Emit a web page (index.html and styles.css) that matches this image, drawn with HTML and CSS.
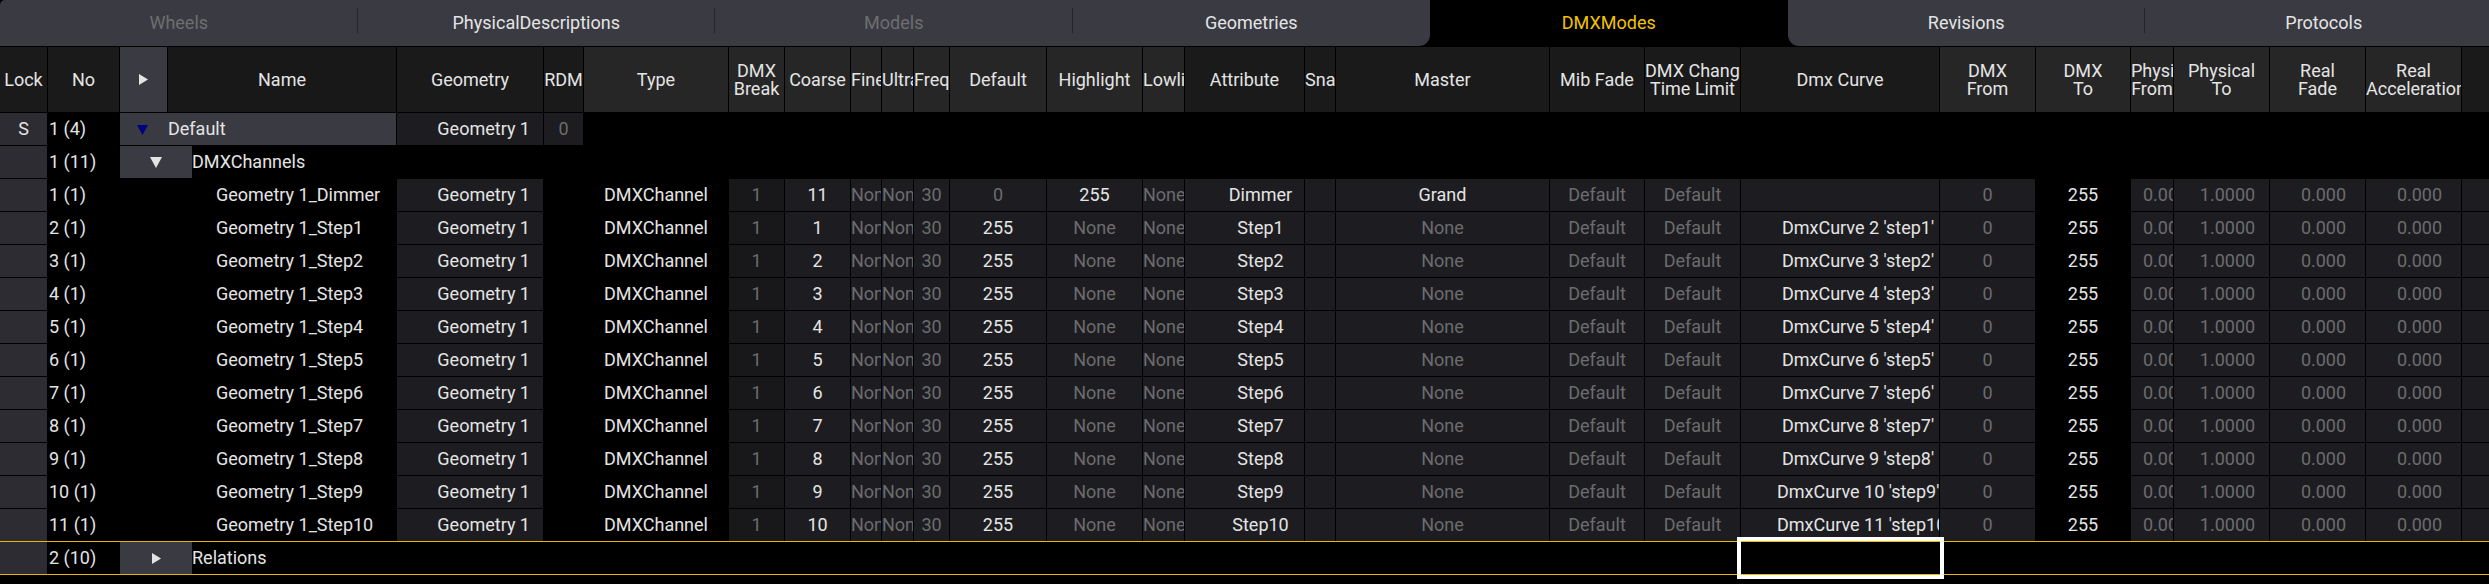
FILE: index.html
```html
<!DOCTYPE html>
<html>
<head>
<meta charset="utf-8">
<link rel="stylesheet" href="styles.css">
</head>
<body>
<div class="tabs">
  <div class="tab off sep first">Wheels</div>
  <div class="tab sep">PhysicalDescriptions</div>
  <div class="tab off sep">Models</div>
  <div class="tab before">Geometries</div>
  <div class="tab active">DMXModes</div>
  <div class="tab after sep">Revisions</div>
  <div class="tab">Protocols</div>
</div>

<div class="row head">
  <div class="h hd">Lock</div>
  <div class="h hd">No</div>
  <div class="h ha"><svg class="tri" width="11" height="11" viewBox="0 0 11 11"><polygon points="1,0 10,5.5 1,11" fill="#e4e4e4"/></svg></div>
  <div class="h hn">Name</div>
  <div class="h hd">Geometry</div>
  <div class="h hd">RDM</div>
  <div class="h hl">Type</div>
  <div class="h hl"><div>DMX<br>Break</div></div>
  <div class="h hl">Coarse</div>
  <div class="h hl">Fine</div>
  <div class="h hl">Ultra</div>
  <div class="h hl">Freq</div>
  <div class="h hl">Default</div>
  <div class="h hl">Highlight</div>
  <div class="h hl">Lowlight</div>
  <div class="h hd">Attribute</div>
  <div class="h hd">Snap</div>
  <div class="h hd">Master</div>
  <div class="h hd">Mib Fade</div>
  <div class="h hd"><div>DMX Change<br>Time Limit</div></div>
  <div class="h hd">Dmx Curve</div>
  <div class="h hl"><div>DMX<br>From</div></div>
  <div class="h hl"><div>DMX<br>To</div></div>
  <div class="h hl"><div>Physical<br>From</div></div>
  <div class="h hl"><div>Physical<br>To</div></div>
  <div class="h hl"><div>Real<br>Fade</div></div>
  <div class="h hl"><div>Real<br>Acceleration</div></div>
  <div class="h hd"></div>
</div>

<div class="row">
  <div class="c lk">S</div>
  <div class="c k l">1 (4)</div>
  <div class="c blk span2"><span class="ibox"><svg width="11" height="11" viewBox="0 0 11 11"><polygon points="0,1 11,1 5.5,11" fill="#000080"/></svg></span>Default</div>
  <div class="c g r">Geometry 1</div>
  <div class="c g dim">0</div>
  <div class="c k rest"></div>
</div>

<div class="row">
  <div class="c lk"></div>
  <div class="c k l">1 (11)</div>
  <div class="c k l tree"><span class="tbox"><svg width="12" height="11" viewBox="0 0 12 11"><polygon points="0,0 12,0 6,11" fill="#e4e4e4"/></svg></span>DMXChannels</div>
</div>

<div class="row">
  <div class="c lk"></div><div class="c k l">1 (1)</div><div class="c k"></div><div class="c k l nm">Geometry 1_Dimmer</div><div class="c g r">Geometry 1</div><div class="c k"></div><div class="c k">DMXChannel</div><div class="c g2 dim">1</div><div class="c g">11</div><div class="c g dim">None</div><div class="c g dim">None</div><div class="c g dim">30</div><div class="c g dim">0</div><div class="c g">255</div><div class="c g dim">None</div><div class="c g at">Dimmer</div><div class="c g"></div><div class="c g">Grand</div><div class="c g dim">Default</div><div class="c g dim">Default</div><div class="c g cv"></div><div class="c g dim">0</div><div class="c k">255</div><div class="c g dim p12">0.0000</div><div class="c g dim p12">1.0000</div><div class="c g dim p12">0.000</div><div class="c g dim p12">0.000</div><div class="c g"></div>
</div>

<div class="row">
  <div class="c lk"></div><div class="c k l">2 (1)</div><div class="c k"></div><div class="c k l nm">Geometry 1_Step1</div><div class="c g r">Geometry 1</div><div class="c k"></div><div class="c k">DMXChannel</div><div class="c g2 dim">1</div><div class="c g">1</div><div class="c g dim">None</div><div class="c g dim">None</div><div class="c g dim">30</div><div class="c g">255</div><div class="c g dim">None</div><div class="c g dim">None</div><div class="c g at">Step1</div><div class="c g"></div><div class="c g dim">None</div><div class="c g dim">Default</div><div class="c g dim">Default</div><div class="c g cv">DmxCurve 2 'step1'</div><div class="c g dim">0</div><div class="c k">255</div><div class="c g dim p12">0.0000</div><div class="c g dim p12">1.0000</div><div class="c g dim p12">0.000</div><div class="c g dim p12">0.000</div><div class="c g"></div>
</div>

<div class="row">
  <div class="c lk"></div><div class="c k l">3 (1)</div><div class="c k"></div><div class="c k l nm">Geometry 1_Step2</div><div class="c g r">Geometry 1</div><div class="c k"></div><div class="c k">DMXChannel</div><div class="c g2 dim">1</div><div class="c g">2</div><div class="c g dim">None</div><div class="c g dim">None</div><div class="c g dim">30</div><div class="c g">255</div><div class="c g dim">None</div><div class="c g dim">None</div><div class="c g at">Step2</div><div class="c g"></div><div class="c g dim">None</div><div class="c g dim">Default</div><div class="c g dim">Default</div><div class="c g cv">DmxCurve 3 'step2'</div><div class="c g dim">0</div><div class="c k">255</div><div class="c g dim p12">0.0000</div><div class="c g dim p12">1.0000</div><div class="c g dim p12">0.000</div><div class="c g dim p12">0.000</div><div class="c g"></div>
</div>

<div class="row">
  <div class="c lk"></div><div class="c k l">4 (1)</div><div class="c k"></div><div class="c k l nm">Geometry 1_Step3</div><div class="c g r">Geometry 1</div><div class="c k"></div><div class="c k">DMXChannel</div><div class="c g2 dim">1</div><div class="c g">3</div><div class="c g dim">None</div><div class="c g dim">None</div><div class="c g dim">30</div><div class="c g">255</div><div class="c g dim">None</div><div class="c g dim">None</div><div class="c g at">Step3</div><div class="c g"></div><div class="c g dim">None</div><div class="c g dim">Default</div><div class="c g dim">Default</div><div class="c g cv">DmxCurve 4 'step3'</div><div class="c g dim">0</div><div class="c k">255</div><div class="c g dim p12">0.0000</div><div class="c g dim p12">1.0000</div><div class="c g dim p12">0.000</div><div class="c g dim p12">0.000</div><div class="c g"></div>
</div>

<div class="row">
  <div class="c lk"></div><div class="c k l">5 (1)</div><div class="c k"></div><div class="c k l nm">Geometry 1_Step4</div><div class="c g r">Geometry 1</div><div class="c k"></div><div class="c k">DMXChannel</div><div class="c g2 dim">1</div><div class="c g">4</div><div class="c g dim">None</div><div class="c g dim">None</div><div class="c g dim">30</div><div class="c g">255</div><div class="c g dim">None</div><div class="c g dim">None</div><div class="c g at">Step4</div><div class="c g"></div><div class="c g dim">None</div><div class="c g dim">Default</div><div class="c g dim">Default</div><div class="c g cv">DmxCurve 5 'step4'</div><div class="c g dim">0</div><div class="c k">255</div><div class="c g dim p12">0.0000</div><div class="c g dim p12">1.0000</div><div class="c g dim p12">0.000</div><div class="c g dim p12">0.000</div><div class="c g"></div>
</div>

<div class="row">
  <div class="c lk"></div><div class="c k l">6 (1)</div><div class="c k"></div><div class="c k l nm">Geometry 1_Step5</div><div class="c g r">Geometry 1</div><div class="c k"></div><div class="c k">DMXChannel</div><div class="c g2 dim">1</div><div class="c g">5</div><div class="c g dim">None</div><div class="c g dim">None</div><div class="c g dim">30</div><div class="c g">255</div><div class="c g dim">None</div><div class="c g dim">None</div><div class="c g at">Step5</div><div class="c g"></div><div class="c g dim">None</div><div class="c g dim">Default</div><div class="c g dim">Default</div><div class="c g cv">DmxCurve 6 'step5'</div><div class="c g dim">0</div><div class="c k">255</div><div class="c g dim p12">0.0000</div><div class="c g dim p12">1.0000</div><div class="c g dim p12">0.000</div><div class="c g dim p12">0.000</div><div class="c g"></div>
</div>

<div class="row">
  <div class="c lk"></div><div class="c k l">7 (1)</div><div class="c k"></div><div class="c k l nm">Geometry 1_Step6</div><div class="c g r">Geometry 1</div><div class="c k"></div><div class="c k">DMXChannel</div><div class="c g2 dim">1</div><div class="c g">6</div><div class="c g dim">None</div><div class="c g dim">None</div><div class="c g dim">30</div><div class="c g">255</div><div class="c g dim">None</div><div class="c g dim">None</div><div class="c g at">Step6</div><div class="c g"></div><div class="c g dim">None</div><div class="c g dim">Default</div><div class="c g dim">Default</div><div class="c g cv">DmxCurve 7 'step6'</div><div class="c g dim">0</div><div class="c k">255</div><div class="c g dim p12">0.0000</div><div class="c g dim p12">1.0000</div><div class="c g dim p12">0.000</div><div class="c g dim p12">0.000</div><div class="c g"></div>
</div>

<div class="row">
  <div class="c lk"></div><div class="c k l">8 (1)</div><div class="c k"></div><div class="c k l nm">Geometry 1_Step7</div><div class="c g r">Geometry 1</div><div class="c k"></div><div class="c k">DMXChannel</div><div class="c g2 dim">1</div><div class="c g">7</div><div class="c g dim">None</div><div class="c g dim">None</div><div class="c g dim">30</div><div class="c g">255</div><div class="c g dim">None</div><div class="c g dim">None</div><div class="c g at">Step7</div><div class="c g"></div><div class="c g dim">None</div><div class="c g dim">Default</div><div class="c g dim">Default</div><div class="c g cv">DmxCurve 8 'step7'</div><div class="c g dim">0</div><div class="c k">255</div><div class="c g dim p12">0.0000</div><div class="c g dim p12">1.0000</div><div class="c g dim p12">0.000</div><div class="c g dim p12">0.000</div><div class="c g"></div>
</div>

<div class="row">
  <div class="c lk"></div><div class="c k l">9 (1)</div><div class="c k"></div><div class="c k l nm">Geometry 1_Step8</div><div class="c g r">Geometry 1</div><div class="c k"></div><div class="c k">DMXChannel</div><div class="c g2 dim">1</div><div class="c g">8</div><div class="c g dim">None</div><div class="c g dim">None</div><div class="c g dim">30</div><div class="c g">255</div><div class="c g dim">None</div><div class="c g dim">None</div><div class="c g at">Step8</div><div class="c g"></div><div class="c g dim">None</div><div class="c g dim">Default</div><div class="c g dim">Default</div><div class="c g cv">DmxCurve 9 'step8'</div><div class="c g dim">0</div><div class="c k">255</div><div class="c g dim p12">0.0000</div><div class="c g dim p12">1.0000</div><div class="c g dim p12">0.000</div><div class="c g dim p12">0.000</div><div class="c g"></div>
</div>

<div class="row">
  <div class="c lk"></div><div class="c k l">10 (1)</div><div class="c k"></div><div class="c k l nm">Geometry 1_Step9</div><div class="c g r">Geometry 1</div><div class="c k"></div><div class="c k">DMXChannel</div><div class="c g2 dim">1</div><div class="c g">9</div><div class="c g dim">None</div><div class="c g dim">None</div><div class="c g dim">30</div><div class="c g">255</div><div class="c g dim">None</div><div class="c g dim">None</div><div class="c g at">Step9</div><div class="c g"></div><div class="c g dim">None</div><div class="c g dim">Default</div><div class="c g dim">Default</div><div class="c g cv">DmxCurve 10 'step9'</div><div class="c g dim">0</div><div class="c k">255</div><div class="c g dim p12">0.0000</div><div class="c g dim p12">1.0000</div><div class="c g dim p12">0.000</div><div class="c g dim p12">0.000</div><div class="c g"></div>
</div>

<div class="row last">
  <div class="c lk"></div><div class="c k l">11 (1)</div><div class="c k"></div><div class="c k l nm">Geometry 1_Step10</div><div class="c g r">Geometry 1</div><div class="c k"></div><div class="c k">DMXChannel</div><div class="c g2 dim">1</div><div class="c g">10</div><div class="c g dim">None</div><div class="c g dim">None</div><div class="c g dim">30</div><div class="c g">255</div><div class="c g dim">None</div><div class="c g dim">None</div><div class="c g at">Step10</div><div class="c g"></div><div class="c g dim">None</div><div class="c g dim">Default</div><div class="c g dim">Default</div><div class="c g cv">DmxCurve 11 'step10'</div><div class="c g dim">0</div><div class="c k">255</div><div class="c g dim p12">0.0000</div><div class="c g dim p12">1.0000</div><div class="c g dim p12">0.000</div><div class="c g dim p12">0.000</div><div class="c g"></div>
</div>

<div class="relations">
  <div class="row">
    <div class="c lk"></div>
    <div class="c k l">2 (10)</div>
    <div class="c k l tree"><span class="tbox"><svg width="11" height="11" viewBox="0 0 11 11"><polygon points="1,0 10,5.5 1,11" fill="#e4e4e4"/></svg></span>Relations</div>
  </div>
  <div class="focus"></div>
</div>
</body>
</html>
```

FILE: styles.css
```css
html, body {
  margin: 0;
  padding: 0;
  background: #000;
}
body {
  width: 2489px;
  height: 584px;
  overflow: hidden;
  font-family: Roboto, "Noto Sans", "Liberation Sans", sans-serif;
  font-size: 18px;
  color: #e4e4e4;
}

/* Tabs */
.tabs {
  display: grid;
  grid-template-columns: repeat(7, 357.5px);
  height: 46px;
  margin-bottom: 1px;
  overflow: hidden;
  width: 2489px;
}
.tab {
  background: #393a42;
  display: flex;
  align-items: center;
  justify-content: center;
  padding-bottom: 2px;
  box-sizing: border-box;
  color: #e4e4e4;
}
.tab.sep {
  background: linear-gradient(#24252b, #24252b) right 8px / 1px 25px no-repeat, #393a42;
}
.tab.first { border-top-left-radius: 5px; }
.tab.off { color: #6e6e70; }
.tab.before { border-bottom-right-radius: 11px; }
.tab.after { border-bottom-left-radius: 11px; }
.tab.active { background: #000; color: #f4c300; }

/* Grid rows */
.row {
  display: grid;
  grid-template-columns: 47px 71px 47px 228px 146px 39px 144px 55px 65px 30px 31px 35px 96px 95px 41px 119px 30px 213px 94px 95px 198px 95px 94px 42px 95px 95px 95px 27px;
  column-gap: 1px;
  height: 32px;
  margin-bottom: 1px;
}
.row.head { height: 65px; }
.row.last { margin-bottom: 0; }

.h {
  display: flex;
  flex-direction: column;
  justify-content: center;
  text-align: center;
  white-space: nowrap;
  overflow: hidden;
  line-height: 18px;
  color: #e4e4e4;
}
.h > div { line-height: 18px; }
.hd { background: #1a1a1a; }
.hn { background: #181818; }
.hl { background: #262626; }
.ha { background: #3a3a42; align-items: center; }
.ha .tri { display: block; }

.c {
  line-height: 32px;
  text-align: center;
  white-space: nowrap;
  overflow: hidden;
}
.k { background: #000; }
.g { background: #1d1d21; }
.g2 { background: #18181a; }
.lk { background: #2c2c32; }
.dim { color: #6c6c6e; }
.l { text-align: left; padding-left: 1px; }
.r { text-align: right; padding-right: 13px; }
.nm { padding-left: 48px; }
.at { padding-left: 32px; }
.cv { padding-left: 36px; }
.p12 { padding-left: 12px; }

.blk {
  background: #3a3a42;
  display: flex;
  align-items: center;
  line-height: 32px;
}
.span2 { grid-column: span 2; }
.rest { grid-column: 7 / -1; }
.ibox {
  width: 48px;
  display: flex;
  justify-content: center;
  padding-right: 4px;
  box-sizing: border-box;
}
.tree {
  grid-column: 3 / -1;
  display: flex;
  align-items: center;
  padding-left: 0;
}
.tbox {
  width: 72px;
  height: 32px;
  background: #3a3a42;
  display: flex;
  align-items: center;
  justify-content: center;
  flex: none;
}
.tbox svg { display: block; }
.ibox svg { display: block; }

.relations {
  position: relative;
  border-top: 1px solid #e8b900;
  border-bottom: 1px solid #e8b900;
}
.relations .row { margin-bottom: 0; }
.focus {
  position: absolute;
  left: 1737px;
  top: -5px;
  width: 207px;
  height: 42px;
  box-sizing: border-box;
  border: 4px solid #fff;
}
```
